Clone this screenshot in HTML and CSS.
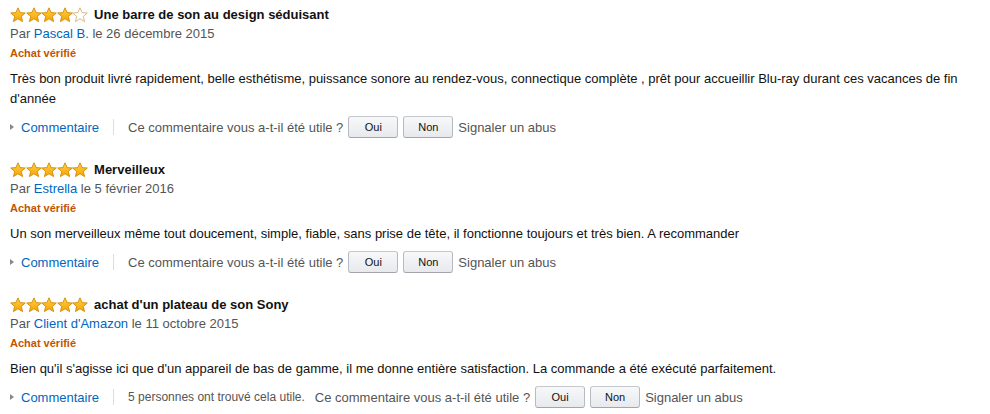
FILE: index.html
```html
<!DOCTYPE html>
<html lang="fr">
<head>
<meta charset="utf-8">
<link rel="stylesheet" href="styles.css">
</head>
<body>
<svg width="0" height="0" class="defs" aria-hidden="true">
  <defs>
    <linearGradient id="sg" x1="0" y1="0" x2="0" y2="1">
      <stop offset="0" stop-color="#ffd24a"/>
      <stop offset="1" stop-color="#f7a200"/>
    </linearGradient>
    <symbol id="star" viewBox="0 0 16 16">
      <polygon points="8,0.8 10.1,5.6 15.3,6 11.3,9.4 12.6,14.6 8,11.8 3.4,14.6 4.7,9.4 0.7,6 5.9,5.6" fill="url(#sg)" stroke="#d08b00" stroke-width="0.9" stroke-linejoin="round"/>
    </symbol>
    <symbol id="star-empty" viewBox="0 0 16 16">
      <polygon points="8,0.8 10.1,5.6 15.3,6 11.3,9.4 12.6,14.6 8,11.8 3.4,14.6 4.7,9.4 0.7,6 5.9,5.6" fill="#fff" stroke="#cfb37a" stroke-width="0.9" stroke-linejoin="round"/>
    </symbol>
  </defs>
</svg>
<div class="reviews">
  <div class="review">
    <div class="title-row">
      <span class="stars">
        <svg class="star"><use href="#star"/></svg><svg class="star"><use href="#star"/></svg><svg class="star"><use href="#star"/></svg><svg class="star"><use href="#star"/></svg><svg class="star"><use href="#star-empty"/></svg>
      </span>
      <span class="title">Une barre de son au design séduisant</span>
    </div>
    <div class="byline">Par <a class="link">Pascal B.</a> le 26 décembre 2015</div>
    <div class="verified">Achat vérifié</div>
    <div class="text">Très bon produit livré rapidement, belle esthétisme, puissance sonore au rendez-vous, connectique complète , prêt pour accueillir Blu-ray durant ces vacances de fin d'année</div>
    <div class="actions">
      <span class="arrow"></span><a class="link">Commentaire</a>
      <span class="sep"></span>
      <span class="question">Ce commentaire vous a-t-il été utile ?</span>
      <button class="btn">Oui</button><button class="btn">Non</button>
      <span class="abuse">Signaler un abus</span>
    </div>
  </div>

  <div class="review">
    <div class="title-row">
      <span class="stars">
        <svg class="star"><use href="#star"/></svg><svg class="star"><use href="#star"/></svg><svg class="star"><use href="#star"/></svg><svg class="star"><use href="#star"/></svg><svg class="star"><use href="#star"/></svg>
      </span>
      <span class="title">Merveilleux</span>
    </div>
    <div class="byline">Par <a class="link">Estrella</a> le 5 février 2016</div>
    <div class="verified">Achat vérifié</div>
    <div class="text">Un son merveilleux même tout doucement, simple, fiable, sans prise de tête, il fonctionne toujours et très bien. A recommander</div>
    <div class="actions">
      <span class="arrow"></span><a class="link">Commentaire</a>
      <span class="sep"></span>
      <span class="question">Ce commentaire vous a-t-il été utile ?</span>
      <button class="btn">Oui</button><button class="btn">Non</button>
      <span class="abuse">Signaler un abus</span>
    </div>
  </div>

  <div class="review">
    <div class="title-row">
      <span class="stars">
        <svg class="star"><use href="#star"/></svg><svg class="star"><use href="#star"/></svg><svg class="star"><use href="#star"/></svg><svg class="star"><use href="#star"/></svg><svg class="star"><use href="#star"/></svg>
      </span>
      <span class="title">achat d'un plateau de son Sony</span>
    </div>
    <div class="byline">Par <a class="link">Client d'Amazon</a> le 11 octobre 2015</div>
    <div class="verified">Achat vérifié</div>
    <div class="text">Bien qu'il s'agisse ici que d'un appareil de bas de gamme, il me donne entière satisfaction. La commande a été exécuté parfaitement.</div>
    <div class="actions">
      <span class="arrow"></span><a class="link">Commentaire</a>
      <span class="sep"></span>
      <span class="count">5 personnes ont trouvé cela utile.</span>
      <span class="question">Ce commentaire vous a-t-il été utile ?</span>
      <button class="btn">Oui</button><button class="btn">Non</button>
      <span class="abuse">Signaler un abus</span>
    </div>
  </div>
</div>
</body>
</html>
```

FILE: styles.css
```css
html, body {
  margin: 0;
  padding: 0;
  background: #fff;
}
body {
  font-family: "Liberation Sans", Arial, sans-serif;
  font-size: 13px;
  line-height: 19px;
  color: #111;
}
.defs {
  position: absolute;
  width: 0;
  height: 0;
}
.reviews {
  padding: 5px 10px 0 10px;
  display: flex;
  flex-direction: column;
  gap: 22px;
}
.review {
  display: flex;
  flex-direction: column;
}
.title-row {
  display: flex;
  align-items: center;
  height: 19px;
}
.stars {
  display: flex;
  gap: 0;
  margin-right: 6px;
}
.star {
  width: 16px;
  height: 16px;
  display: block;
  margin-right: -0.4px;
}
.title {
  font-weight: bold;
  color: #111;
}
.byline {
  color: #555;
}
.link {
  color: #0066c0;
  text-decoration: none;
}
.verified {
  margin-top: 1px;
  font-size: 11px;
  font-weight: bold;
  color: #c45500;
}
.text {
  margin-top: 6px;
  line-height: 20px;
  color: #111;
}
.actions {
  margin-top: 7px;
  display: flex;
  align-items: center;
  height: 22px;
  color: #555;
}
.arrow {
  width: 0;
  height: 0;
  border-top: 3.5px solid transparent;
  border-bottom: 3.5px solid transparent;
  border-left: 4px solid #888;
  margin-right: 7px;
}
.sep {
  width: 1px;
  height: 16px;
  background: #ddd;
  margin: 0 14px;
}
.count {
  font-size: 12px;
  margin-right: 10px;
}
.question {
  margin-right: 5px;
}
.btn {
  font-family: "Liberation Sans", Arial, sans-serif;
  font-size: 11px;
  color: #111;
  width: 50px;
  height: 22px;
  padding: 0;
  margin: 0 5px 0 0;
  border: 1px solid #adb1b8;
  border-color: #c5c8cd #b7bac0 #a2a6ac;
  border-radius: 3px;
  background: linear-gradient(#f7f8fa, #e7e9ec);
}
.abuse {
  color: #555;
}
```
